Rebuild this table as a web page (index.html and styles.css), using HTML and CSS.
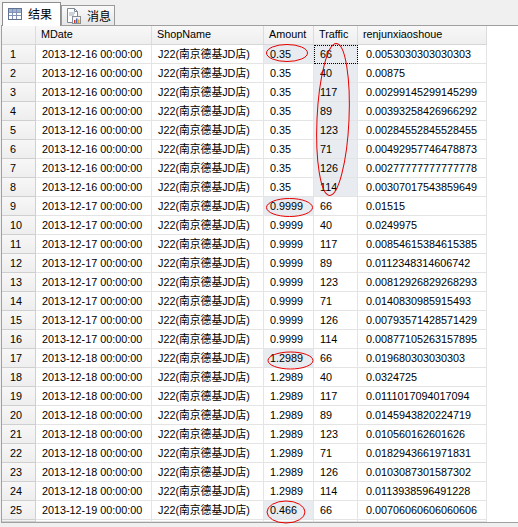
FILE: index.html
```html
<!DOCTYPE html>
<html>
<head>
<meta charset="utf-8">
<link rel="stylesheet" href="styles.css">
</head>
<body>
<div class="app">
  <div class="tabs">
    <div class="tab active">
      <svg class="ico" width="14" height="12" viewBox="0 0 14 12">
        <rect x="0.5" y="0.5" width="13" height="11" fill="#fff" stroke="#5f7291"/>
        <rect x="1" y="1" width="12" height="3" fill="#9fb2cf"/>
        <path d="M1 4.5H13M1 7.5H13M4.5 1V11M8.5 1V11" stroke="#8095b5" fill="none"/>
      </svg>
      <span class="tab-label">结果</span>
    </div>
    <div class="tab">
      <svg class="ico" width="15" height="16" viewBox="0 0 15 16">
        <path d="M1.5 0.5H8.5L11.5 3.5V14.5H1.5Z" fill="#fff" stroke="#7d8793"/>
        <path d="M8.5 0.5V3.5H11.5" fill="none" stroke="#7d8793"/>
        <path d="M3 5H9M3 7H8" stroke="#9aa6b4"/>
        <rect x="6.5" y="8.5" width="8" height="7" fill="#f4f4f4" stroke="#8a8f96"/>
        <rect x="8" y="12" width="1.5" height="3" fill="#d43b2a"/>
        <rect x="10" y="10.5" width="1.5" height="4.5" fill="#3a6fc4"/>
        <rect x="12" y="11.5" width="1.5" height="3.5" fill="#e8a02a"/>
      </svg>
      <span class="tab-label">消息</span>
    </div>
  </div>

  <div class="grid">
    <div class="hc corner"></div>
    <div class="hc">MDate</div>
    <div class="hc">ShopName</div>
    <div class="hc">Amount</div>
    <div class="hc">Traffic</div>
    <div class="hc">renjunxiaoshoue</div>
    <div class="fill"></div>

    <div class="rh">1</div><div class="c">2013-12-16 00:00:00</div><div class="c">J22(南京德基JD店)</div><div class="c sel">0.35</div><div class="c sel focus">66</div><div class="c r">0.0053030303030303</div><div class="fill"></div>
    <div class="rh">2</div><div class="c">2013-12-16 00:00:00</div><div class="c">J22(南京德基JD店)</div><div class="c">0.35</div><div class="c sel">40</div><div class="c r">0.00875</div><div class="fill"></div>
    <div class="rh">3</div><div class="c">2013-12-16 00:00:00</div><div class="c">J22(南京德基JD店)</div><div class="c">0.35</div><div class="c sel">117</div><div class="c r">0.00299145299145299</div><div class="fill"></div>
    <div class="rh">4</div><div class="c">2013-12-16 00:00:00</div><div class="c">J22(南京德基JD店)</div><div class="c">0.35</div><div class="c sel">89</div><div class="c r">0.00393258426966292</div><div class="fill"></div>
    <div class="rh">5</div><div class="c">2013-12-16 00:00:00</div><div class="c">J22(南京德基JD店)</div><div class="c">0.35</div><div class="c sel">123</div><div class="c r">0.00284552845528455</div><div class="fill"></div>
    <div class="rh">6</div><div class="c">2013-12-16 00:00:00</div><div class="c">J22(南京德基JD店)</div><div class="c">0.35</div><div class="c sel">71</div><div class="c r">0.00492957746478873</div><div class="fill"></div>
    <div class="rh">7</div><div class="c">2013-12-16 00:00:00</div><div class="c">J22(南京德基JD店)</div><div class="c">0.35</div><div class="c sel">126</div><div class="c r">0.00277777777777778</div><div class="fill"></div>
    <div class="rh">8</div><div class="c">2013-12-16 00:00:00</div><div class="c">J22(南京德基JD店)</div><div class="c">0.35</div><div class="c sel">114</div><div class="c r">0.00307017543859649</div><div class="fill"></div>
    <div class="rh">9</div><div class="c">2013-12-17 00:00:00</div><div class="c">J22(南京德基JD店)</div><div class="c sel">0.9999</div><div class="c">66</div><div class="c r">0.01515</div><div class="fill"></div>
    <div class="rh">10</div><div class="c">2013-12-17 00:00:00</div><div class="c">J22(南京德基JD店)</div><div class="c">0.9999</div><div class="c">40</div><div class="c r">0.0249975</div><div class="fill"></div>
    <div class="rh">11</div><div class="c">2013-12-17 00:00:00</div><div class="c">J22(南京德基JD店)</div><div class="c">0.9999</div><div class="c">117</div><div class="c r">0.00854615384615385</div><div class="fill"></div>
    <div class="rh">12</div><div class="c">2013-12-17 00:00:00</div><div class="c">J22(南京德基JD店)</div><div class="c">0.9999</div><div class="c">89</div><div class="c r">0.0112348314606742</div><div class="fill"></div>
    <div class="rh">13</div><div class="c">2013-12-17 00:00:00</div><div class="c">J22(南京德基JD店)</div><div class="c">0.9999</div><div class="c">123</div><div class="c r">0.00812926829268293</div><div class="fill"></div>
    <div class="rh">14</div><div class="c">2013-12-17 00:00:00</div><div class="c">J22(南京德基JD店)</div><div class="c">0.9999</div><div class="c">71</div><div class="c r">0.0140830985915493</div><div class="fill"></div>
    <div class="rh">15</div><div class="c">2013-12-17 00:00:00</div><div class="c">J22(南京德基JD店)</div><div class="c">0.9999</div><div class="c">126</div><div class="c r">0.00793571428571429</div><div class="fill"></div>
    <div class="rh">16</div><div class="c">2013-12-17 00:00:00</div><div class="c">J22(南京德基JD店)</div><div class="c">0.9999</div><div class="c">114</div><div class="c r">0.00877105263157895</div><div class="fill"></div>
    <div class="rh">17</div><div class="c">2013-12-18 00:00:00</div><div class="c">J22(南京德基JD店)</div><div class="c sel">1.2989</div><div class="c">66</div><div class="c r">0.019680303030303</div><div class="fill"></div>
    <div class="rh">18</div><div class="c">2013-12-18 00:00:00</div><div class="c">J22(南京德基JD店)</div><div class="c">1.2989</div><div class="c">40</div><div class="c r">0.0324725</div><div class="fill"></div>
    <div class="rh">19</div><div class="c">2013-12-18 00:00:00</div><div class="c">J22(南京德基JD店)</div><div class="c">1.2989</div><div class="c">117</div><div class="c r">0.0111017094017094</div><div class="fill"></div>
    <div class="rh">20</div><div class="c">2013-12-18 00:00:00</div><div class="c">J22(南京德基JD店)</div><div class="c">1.2989</div><div class="c">89</div><div class="c r">0.0145943820224719</div><div class="fill"></div>
    <div class="rh">21</div><div class="c">2013-12-18 00:00:00</div><div class="c">J22(南京德基JD店)</div><div class="c">1.2989</div><div class="c">123</div><div class="c r">0.010560162601626</div><div class="fill"></div>
    <div class="rh">22</div><div class="c">2013-12-18 00:00:00</div><div class="c">J22(南京德基JD店)</div><div class="c">1.2989</div><div class="c">71</div><div class="c r">0.0182943661971831</div><div class="fill"></div>
    <div class="rh">23</div><div class="c">2013-12-18 00:00:00</div><div class="c">J22(南京德基JD店)</div><div class="c">1.2989</div><div class="c">126</div><div class="c r">0.0103087301587302</div><div class="fill"></div>
    <div class="rh">24</div><div class="c">2013-12-18 00:00:00</div><div class="c">J22(南京德基JD店)</div><div class="c">1.2989</div><div class="c">114</div><div class="c r">0.0113938596491228</div><div class="fill"></div>
    <div class="rh">25</div><div class="c">2013-12-19 00:00:00</div><div class="c">J22(南京德基JD店)</div><div class="c sel">0.466</div><div class="c">66</div><div class="c r">0.00706060606060606</div><div class="fill"></div>

    <div class="rh"></div><div class="c"></div><div class="c"></div><div class="c"></div><div class="c"></div><div class="c"></div><div class="fill"></div>
  </div>

  <svg class="marks" width="518" height="527" viewBox="0 0 518 527">
    <ellipse cx="287" cy="53" rx="20.5" ry="8.5"/>
    <ellipse cx="333" cy="119.5" rx="16" ry="76" transform="rotate(2.6 333 119.5)"/>
    <ellipse cx="289.5" cy="207.5" rx="23" ry="9"/>
    <ellipse cx="290.5" cy="360.5" rx="22.5" ry="8.5"/>
    <ellipse cx="286" cy="512" rx="19" ry="11"/>
  </svg>
</div>
</body>
</html>
```

FILE: styles.css
```css
* { box-sizing: border-box; }

body {
  margin: 0;
  background: #f0f0f0;
  font-family: "Liberation Sans", "Noto Sans CJK SC", sans-serif;
  color: #000;
}

.app {
  position: relative;
  width: 518px;
  height: 527px;
  overflow: hidden;
}

/* tab strip */
.tabs {
  height: 25px;
  display: flex;
  align-items: flex-end;
  padding-left: 2px;
}

.tab {
  display: flex;
  align-items: center;
  height: 20px;
  width: 54px;
  padding-left: 4px;
  border: 1px solid #9a9a9a;
  border-bottom: none;
  background: linear-gradient(#fafafa, #e6e6e6);
  font-family: "Noto Sans CJK SC", sans-serif;
  font-size: 12px;
}

.tab.active {
  position: relative;
  z-index: 1;
  height: 24px;
  width: 59px;
  margin-bottom: -1px;
  padding-left: 5px;
  padding-bottom: 1px;
  background: #fff;
  border-color: #8e8e8e;
}

.tab .ico { flex: none; }
.tab .tab-label { margin-left: 6px; line-height: 16px; }

/* results grid */
.grid {
  margin-left: 1px;
  width: 517px;
  height: 498px;
  border: 1px solid #a0a0a0;
  border-right: none;
  background: #fff;
  overflow: hidden;
  display: grid;
  grid-template-columns: 34px 116px 112px 50px 44px 129px 1fr;
  grid-template-rows: 19px repeat(25, 19px) 1fr;
  font-size: 10.8px;
  white-space: nowrap;
}

.hc {
  background: linear-gradient(#f8f8f8, #efefef);
  border-right: 1px solid #dcdcdc;
  border-bottom: 1px solid #d6d6d6;
  padding-left: 5px;
  line-height: 17px;
  overflow: hidden;
}

.rh {
  background: linear-gradient(#f7f7f7, #eeeeee);
  border-right: 1px solid #d0d0d0;
  border-bottom: 1px solid #cfcfcf;
  padding-left: 8px;
  line-height: 18px;
}

.c {
  border-right: 1px solid #e4e4e4;
  border-bottom: 1px solid #e4e4e4;
  padding-left: 6px;
  line-height: 18px;
  overflow: hidden;
}

.c.r { padding-left: 8px; }

.c.sel { background: #e8ecf0; }

.c.focus {
  outline: 1px dotted #000;
  outline-offset: -1px;
}

.fill { background: #fff; }

/* hand-drawn red annotation ellipses */
.marks {
  position: absolute;
  left: 0;
  top: 0;
  pointer-events: none;
}

.marks ellipse {
  fill: none;
  stroke: #e60000;
  stroke-width: 1;
}
```
